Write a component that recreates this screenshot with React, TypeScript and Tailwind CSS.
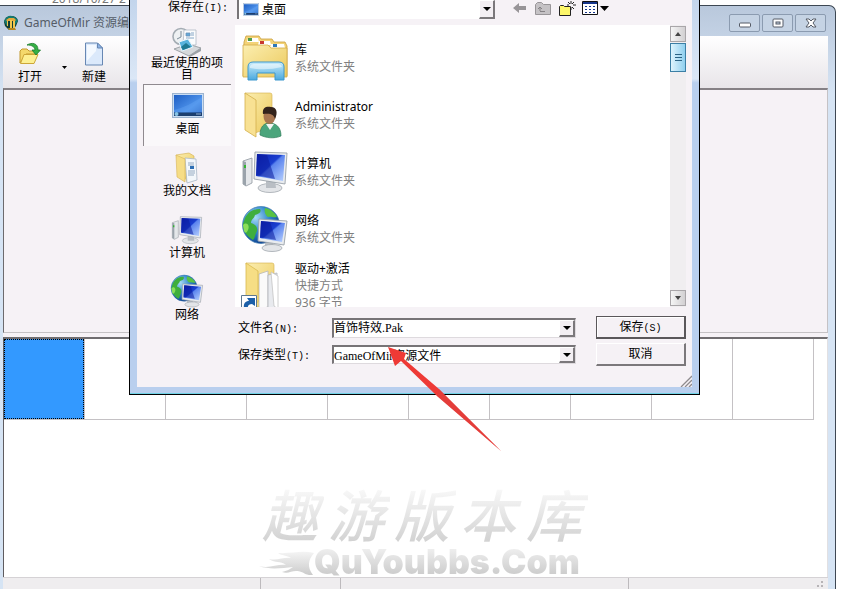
import type { ReactNode } from "react";

const ui = "font-['Noto_Sans','Noto_Sans_CJK_SC',sans-serif]";
const song = "font-['Liberation_Serif','Noto_Sans_CJK_SC',serif]";

function Defs() {
  return (
    <svg className="absolute w-0 h-0" aria-hidden="true">
      <defs>
        <linearGradient id="screen" x1="0" y1="0" x2="1" y2="1">
          <stop offset="0" stopColor="#0a1fae" />
          <stop offset="0.45" stopColor="#1a3fd0" />
          <stop offset="0.5" stopColor="#5b84ee" />
          <stop offset="1" stopColor="#b9d2ff" />
        </linearGradient>
        <linearGradient id="desk" x1="0" y1="0" x2="1" y2="1">
          <stop offset="0" stopColor="#1f5fc4" />
          <stop offset="0.6" stopColor="#4d92ea" />
          <stop offset="1" stopColor="#2560bf" />
        </linearGradient>
        <linearGradient id="folder" x1="0" y1="0" x2="1" y2="1">
          <stop offset="0" stopColor="#fbeeb0" />
          <stop offset="1" stopColor="#ecc95c" />
        </linearGradient>
        <linearGradient id="glass" x1="0" y1="0" x2="0" y2="1">
          <stop offset="0" stopColor="#c9ecfa" />
          <stop offset="1" stopColor="#4ba9de" />
        </linearGradient>
        <radialGradient id="globe" cx="0.35" cy="0.3" r="0.75">
          <stop offset="0" stopColor="#a8dcf5" />
          <stop offset="0.5" stopColor="#2f86cc" />
          <stop offset="1" stopColor="#0d3f8e" />
        </radialGradient>
        <linearGradient id="smoke" x1="0" y1="0" x2="0" y2="1">
          <stop offset="0" stopColor="#f4f4f4" />
          <stop offset="1" stopColor="#cbcbcb" />
        </linearGradient>
      </defs>
    </svg>
  );
}

function ComputerIcon({ className }: { className: string }) {
  return (
    <svg viewBox="0 0 48 48" className={className} aria-hidden="true">
      <path d="M2 13l9-3v25l-6 3-3-2z" fill="#e4e7ea" stroke="#8f979f" strokeWidth="0.8" />
      <path d="M2 13l3 1v24l-3-2z" fill="#9aa3ab" />
      <path d="M3 17h2v3H3z" fill="#31b531" />
      <ellipse cx="29" cy="40" rx="12" ry="4.5" fill="#e3e5e8" stroke="#a2a8ae" strokeWidth="0.8" />
      <path d="M25 32h9l1 8h-10z" fill="#b9bec4" />
      <path d="M14 4l32 1-2 31-31-5z" fill="#e9ecef" stroke="#9aa1a9" strokeWidth="0.9" />
      <path d="M16 6l28 1-2 26-27-5z" fill="url(#screen)" />
      <path d="M16 6l10 1 8 24-19-4z" fill="#0b1c9c" opacity="0.55" />
    </svg>
  );
}

function NetworkIcon({ className }: { className: string }) {
  return (
    <svg viewBox="0 0 48 48" className={className} aria-hidden="true">
      <circle cx="20" cy="20" r="18.5" fill="url(#globe)" stroke="#2a6aa5" strokeWidth="0.6" />
      <path d="M4 13c4-7 9-9 15-9 2 3-1 5-5 6-1 4-4 4-4 8 4 1 7 4 6 8-2 3-2 7-4 9-5-3-10-8-10-16z" fill="#3fae3c" />
      <path d="M24 3c6 1 10 5 12 9-4 1-6-1-9 0-3-2-4-6-3-9z" fill="#58c243" />
      <path d="M2 20c4-4 7 1 5 5s-3 3-4 1z" fill="#8ade59" />
      <path d="M24 38h8l1 5h-9z" fill="#b9bec4" />
      <ellipse cx="31" cy="43" rx="10" ry="3.5" fill="#e3e5e8" stroke="#a2a8ae" strokeWidth="0.8" />
      <path d="M18 14l28 2-3 24-26-4z" fill="#e9ecef" stroke="#9aa1a9" strokeWidth="0.9" />
      <path d="M20 16l24 2-3 19-22-4z" fill="url(#screen)" />
      <path d="M20 16l9 1 6 18-16-3z" fill="#0b1c9c" opacity="0.55" />
    </svg>
  );
}

function DesktopIcon({ className }: { className: string }) {
  return (
    <svg viewBox="0 0 32 25" className={className} aria-hidden="true">
      <rect x="0.5" y="0.5" width="31" height="24" fill="#c9ddf3" stroke="#9db4cf" />
      <rect x="2" y="2" width="28" height="21" fill="url(#desk)" />
      <path d="M2 17C12 15 22 9 30 4v15H2z" fill="#6aaaf5" opacity="0.35" />
      <rect x="2" y="19.500" width="28" height="3.500" fill="#1c3f6f" />
      <circle cx="4.500" cy="21" r="2" fill="#86c3e6" />
      <path d="M24 21h5" stroke="#8fb0d5" />
    </svg>
  );
}

function RecentIcon() {
  return (
    <svg viewBox="0 0 32 30" className="w-8 h-[30px]" aria-hidden="true">
      <path d="M3 22l14-5 13 4-12 8z" fill="#d5d8db" stroke="#8e9499" strokeWidth="0.8" />
      <path d="M18 29l12-8v3l-11 6z" fill="#9aa0a5" />
      <circle cx="10" cy="9.500" r="8" fill="#eef1f3" stroke="#a4acb3" strokeWidth="1.600" />
      <path d="M10 4v6l-4 2" fill="none" stroke="#7b8b98" />
      <path d="M13 3h12v15H12z" fill="#fbfcfd" stroke="#a7b2bd" strokeWidth="0.7" />
      <path d="M15 6h4v3h-4zM20 6h3M20 8h3M15 11h8" fill="#63a8d8" stroke="#6a93b8" strokeWidth="0.8" />
      <path d="M8 15l9-3 5 8-11 4z" fill="#58b3dd" stroke="#e8f5fb" />
      <path d="M10 20l5-4 5 4-8 3z" fill="#1f7a93" />
    </svg>
  );
}

function DocumentsIcon() {
  return (
    <svg viewBox="0 0 28 32" className="w-7 h-8" aria-hidden="true">
      <path d="M3 3l13-2 5 3v22l-7 4z" fill="url(#folder)" stroke="#d3ae4b" strokeWidth="0.6" />
      <path d="M12 6l11 1 1 21-10 3z" fill="#f3f7fb" stroke="#a9b7c6" strokeWidth="0.8" />
      <path d="M15 11h6M15 13h6M15 19h7M15 21h7M15 23h6" stroke="#96abc2" />
      <path d="M17 14h4v3h-4z" fill="#2e6fb4" />
      <path d="M3 3l9 4v23l-8-5z" fill="#f6dd86" stroke="#d6b455" strokeWidth="0.6" />
    </svg>
  );
}

function LibraryIcon() {
  return (
    <svg viewBox="0 0 48 48" className="w-12 h-12" aria-hidden="true">
      <path d="M3 8l2-6h13l2 3h11l2 3h11l2 4v30H2z" fill="#f3d377" stroke="#c99f3c" strokeWidth="0.8" />
      <path d="M7 4h10l1 4H6z" fill="#fff" />
      <path d="M7 4h4v3H7z" fill="#4c9a49" />
      <path d="M18 7h11l1 4H17z" fill="#fff" />
      <path d="M19 7h4v3h-4z" fill="#c8382f" />
      <path d="M30 10h13l1 4H29z" fill="#fff" />
      <path d="M32 10h4v3h-4z" fill="#2e78b8" />
      <path d="M2 11h25l3 3h16v29H2z" fill="url(#folder)" stroke="#d3ab48" strokeWidth="0.8" />
      <path d="M7 46V33q0-5 5-5h26q5 0 5 5v13h-9v-7H16v7z" fill="url(#glass)" stroke="#3d97cd" />
      <path d="M9 32q1-2 4-2h24q3 0 4 3-16 4-32 1z" fill="#fff" opacity="0.5" />
    </svg>
  );
}

function UserFolderIcon() {
  return (
    <svg viewBox="0 0 48 48" className="w-12 h-12" aria-hidden="true">
      <path d="M4 2h25q2 0 2 2v32l-17 6z" fill="url(#folder)" stroke="#d3ae4b" strokeWidth="0.6" />
      <path d="M4 2l11 7v37L4 39z" fill="#f8e193" stroke="#d3ae4b" strokeWidth="0.8" />
      <path d="M19 44c0-8 4-12 9-12 7 0 12 4 12 13-7 3-15 2-21-1z" fill="#4ba57c" stroke="#2f7d5a" strokeWidth="0.7" />
      <path d="M25 33l4 6 4-6z" fill="#f2f5f3" />
      <ellipse cx="28.500" cy="25" rx="6" ry="8" fill="#a87650" />
      <path d="M22 23c-1-7 4-8 8-7 6 0 7 6 4 12-1-5-5-6-12-5z" fill="#33231b" />
    </svg>
  );
}

function ShortcutIcon() {
  return (
    <svg viewBox="0 0 48 48" className="w-12 h-12" aria-hidden="true">
      <path d="M5 1h26q2 0 2 2v38l-20 5z" fill="url(#folder)" stroke="#d3ae4b" strokeWidth="0.6" />
      <path d="M18 12l9-3v36l-9 2z" fill="#fafafa" stroke="#b8b8b8" strokeWidth="0.8" />
      <path d="M27 13l9-2v35h-9z" fill="#e8eaee" stroke="#b0b4ba" strokeWidth="0.8" />
      <path d="M30 10l7 4v33l-4-3z" fill="#fff" stroke="#c4c4c4" strokeWidth="0.8" />
      <path d="M5 1l12 8v31l-12 4z" fill="#f6de85" stroke="#d9b94f" strokeWidth="0.8" />
      <path d="M.5 33.500h15V48H.5z" fill="#fff" stroke="#5d7890" />
      <path d="M3 47c-1-6 2-8 5-8l-2-3h8v8l-3-2c-3 0-5 2-4 5z" fill="#1b5fa8" />
    </svg>
  );
}

function TitleIcon() {
  return (
    <svg viewBox="0 0 16 16" className="w-4 h-4" aria-hidden="true">
      <path d="M1 7q1-6 7-6 6 0 7 5l-2 5-3 4H6l-4-4z" fill="#143f35" />
      <path d="M1 6q3-6 8-5 5 1 6 5l-3 4-1-4H5l-1 5z" fill="#147a70" />
      <path d="M3 5l3-2h5l2 2-1 1H4z" fill="#e3a93b" />
      <path d="M7 5h2v8H7zM10 6h2v8h-2zM4 6h1v5H4z" fill="#f0c64d" />
      <path d="M5 13h7l1 2H6z" fill="#b8861d" />
    </svg>
  );
}

function OpenIcon() {
  return (
    <svg viewBox="0 0 24 24" className="w-6 h-6" aria-hidden="true">
      <path d="M2 21V9l2-2h5l2 2h7v3H8z" fill="#f4d96c" stroke="#c2992e" />
      <path d="M2.500 21.500L6 12.500h14l-4 9z" fill="#fdf092" stroke="#cda638" />
      <path d="M9 3c5-3 11-2 11 5h2.500L18 13l-4-5h3c0-3-3-5-8-5z" fill="#35b045" stroke="#1b7a2a" strokeWidth="0.8" />
    </svg>
  );
}

function NewIcon() {
  return (
    <svg viewBox="0 0 24 24" className="w-6 h-6" aria-hidden="true">
      <path d="M3.500 1h12l5 5v17h-17z" fill="#dbe9fb" stroke="#6787b3" />
      <path d="M5 3h9v6L5 19z" fill="#f4f9ff" />
      <path d="M15.500 1v5h5z" fill="#8fb4e6" stroke="#6787b3" />
    </svg>
  );
}

function Triangle() {
  return (
    <svg viewBox="0 0 8 4" className="w-2 h-1" aria-hidden="true">
      <path d="M0 0h8L4 4z" fill="#000" />
    </svg>
  );
}

const raised =
  "flex items-center justify-center bg-[#f3eff3] border-t border-l border-t-white border-l-white border-r-2 border-b-2 border-r-[#7b787b] border-b-[#7b787b]";
const sunken =
  "border-t-2 border-l-2 border-t-[#777477] border-l-[#777477] border-b border-r border-b-[#dedade] border-r-[#dedade]";

function Mono({ children }: { children: ReactNode }) {
  return <span className="font-['Liberation_Mono',monospace] text-[10px]">{children}</span>;
}

function Drop({ id, value, className }: { id: string; value: string; className: string }) {
  return (
    <div className={`relative bg-white ${className}`}>
      <select id={id} className="block w-full h-full appearance-none bg-transparent outline-none pr-5 text-[12px] text-black">
        <option>{value}</option>
      </select>
      <span className={`absolute right-0 top-0 bottom-0 w-4 pointer-events-none ${raised}`}>
        <Triangle />
      </span>
    </div>
  );
}

const places = [
  { name: "桌面", icon: <DesktopIcon className="w-8 h-[25px] mb-1" />, active: true },
  { name: "我的文档", icon: <DocumentsIcon /> },
  { name: "计算机", icon: <ComputerIcon className="w-8 h-8" /> },
  { name: "网络", icon: <NetworkIcon className="w-[34px] h-[34px]" /> },
];

const files = [
  { name: "库", info: ["系统文件夹"], icon: <LibraryIcon /> },
  { name: "Administrator", info: ["系统文件夹"], icon: <UserFolderIcon /> },
  { name: "计算机", info: ["系统文件夹"], icon: <ComputerIcon className="w-12 h-12" /> },
  { name: "网络", info: ["系统文件夹"], icon: <NetworkIcon className="w-12 h-12" /> },
  { name: "驱动+激活", info: ["快捷方式", "936 字节"], icon: <ShortcutIcon /> },
];

function PlacesBar() {
  return (
    <nav className="w-[88px] shrink-0 text-center text-[12px]">
      <button className="flex flex-col items-center w-full h-[59px] pt-[2px] leading-[12px]">
        <RecentIcon />
        <span className="w-[74px]">最近使用的项目</span>
      </button>
      {places.map((p) => (
        <button
          key={p.name}
          className={
            p.active
              ? "flex flex-col items-center justify-end w-full h-[62px] pb-[10px] leading-[14px] border-t border-l border-[#8f8a8f] bg-[#faf8fa]"
              : "flex flex-col items-center justify-end w-full h-[62px] pb-[10px] leading-[14px]"
          }
        >
          {p.icon}
          <span>{p.name}</span>
        </button>
      ))}
    </nav>
  );
}

function FileList() {
  return (
    <div className="flex flex-1 h-[282px] bg-white overflow-hidden">
      <ul className={`flex-1 pt-1 pl-[6px] ${ui} text-[12px] leading-[17px]`}>
        {files.map((f) => (
          <li key={f.name} className="flex items-center h-[57px] gap-[6px]">
            {f.icon}
            <div>
              <p className="text-black">{f.name}</p>
              {f.info.map((t) => (
                <p key={t} className="text-[#808080]">{t}</p>
              ))}
            </div>
          </li>
        ))}
      </ul>
      <div className="w-4 flex flex-col bg-[#f0eef0] py-px">
        <button aria-label="向上滚动" className="flex items-center justify-center h-4 border border-[#a9a6a9] bg-linear-to-r from-[#f5f5f5] to-[#d2d0d2]">
          <svg viewBox="0 0 6 4" className="w-[6px] h-1"><path d="M3 0l3 4H0z" fill="#444" /></svg>
        </button>
        <div className="flex flex-col items-center justify-center gap-[2px] h-[29px] mt-px border border-[#3c7fa5] bg-linear-to-r from-[#def4fd] to-[#8fcfee]">
          <span className="w-[7px] h-px bg-[#2b6384]" />
          <span className="w-[7px] h-px bg-[#2b6384]" />
          <span className="w-[7px] h-px bg-[#2b6384]" />
        </div>
        <button aria-label="向下滚动" className="flex items-center justify-center h-4 mt-auto border border-[#a9a6a9] bg-linear-to-r from-[#f5f5f5] to-[#d2d0d2]">
          <svg viewBox="0 0 6 4" className="w-[6px] h-1"><path d="M0 0h6L3 4z" fill="#444" /></svg>
        </button>
      </div>
    </div>
  );
}

function SaveDialog() {
  return (
    <section
      aria-label="另存为"
      className={`absolute left-[129px] right-[143px] top-0 border-x border-b border-black bg-linear-to-b from-[#c3d5ec] via-[#dbe7f6] via-20% to-[#b9cfee] to-21% px-[7px] pb-[7px] text-[12px] text-black ${song}`}
    >
      <div className="absolute inset-x-0 bottom-0 h-px bg-[#6fd3e6]" />
      <form className="bg-[#f6f2f6] pl-[6px]" onSubmit={(e) => e.preventDefault()}>
        <div className="flex items-start">
          <label htmlFor="folder-pick" className="w-[94px] pl-[25px] leading-[14px]">
            保存在<Mono>(I):</Mono>
          </label>
          <div className="flex w-[258px] h-[19px] bg-white border-l-2 border-[#777477]">
            <span className="flex items-center pl-1"><DesktopIcon className="w-4 h-[13px]" /></span>
            <Drop id="folder-pick" value="桌面" className="flex-1 pl-[3px]" />
          </div>
          <div className="flex items-center h-4 ml-[18px] gap-2">
            <button aria-label="后退">
              <svg viewBox="0 0 14 12" className="block w-[14px] h-3"><path d="M0 6l6-5v3h7v4H6v3z" fill="#989598" /></svg>
            </button>
            <button aria-label="上一级">
              <svg viewBox="0 0 16 14" className="block w-4 h-[14px]">
                <path d="M.5 3.500l2-2h4l2 2h7v10H.5z" fill="#c5c2c5" stroke="#989598" />
                <path d="M5 10V6M3 8l2-2 2 2M5 10.500h5" fill="none" stroke="#858285" />
              </svg>
            </button>
            <button aria-label="新建文件夹">
              <svg viewBox="0 0 17 15" className="block w-[17px] h-[15px]">
                <path d="M.5 5.500l1-1h3l1 1h6v9H.5z" fill="#fdf76a" stroke="#222" />
                <path d="M12 0v3M12 6v3M8 4h2M14 4h3M9 1l2 2M15 1l-2 2M15 8l-2-2" stroke="#222" />
              </svg>
            </button>
            <button aria-label="查看" className="flex items-center gap-[2px] -ml-[2px]">
              <svg viewBox="0 0 16 14" className="block w-4 h-[14px]">
                <path d="M.5.500h15v13H.5z" fill="#fff" stroke="#111" />
                <path d="M1 1h14v2H1z" fill="#16358c" />
                <path d="M3 5.500h2M3 8.500h2M3 11.500h2M7 5.500h2M7 8.500h2M7 11.500h2M11 5.500h2M11 8.500h2M11 11.500h2" stroke="#16358c" />
              </svg>
              <svg viewBox="0 0 9 5" className="block w-[9px] h-[5px]"><path d="M0 0h9L4.500 5z" fill="#000" /></svg>
            </button>
          </div>
        </div>

        <div className="flex pr-[6px] pt-[6px] gap-1 h-[288px]">
          <PlacesBar />
          <FileList />
        </div>

        <div className="pl-[95px] pr-[6px] pt-[9px] grid grid-cols-[94px_1fr_90px] gap-y-1 items-center">
          <label htmlFor="file-name">文件名<Mono>(N):</Mono></label>
          <div className={`flex h-5 mr-5 bg-white ${sunken}`}>
            <input id="file-name" type="text" defaultValue="首饰特效.Pak" className="flex-1 min-w-0 outline-none text-[12px]" />
            <button type="button" aria-label="展开" className={`w-4 ${raised}`}><Triangle /></button>
          </div>
          <button type="submit" className="h-[23px] bg-[#f5f1f5] border border-[#5a575a] border-r-2 border-b-2 shadow-[inset_1px_1px_0_#fff]">
            保存<Mono>(S)</Mono>
          </button>
          <label htmlFor="file-type">保存类型<Mono>(T):</Mono></label>
          <Drop id="file-type" value="GameOfMir资源文件" className={`h-[19px] mr-5 ${sunken}`} />
          <button type="button" className="h-[23px] bg-[#f5f1f5] border border-t-white border-l-white border-r-2 border-b-2 border-r-[#7b787b] border-b-[#7b787b]">
            取消
          </button>
        </div>
        <div className="flex justify-end h-[21px] items-end">
          <svg viewBox="0 0 12 12" className="w-3 h-3" aria-hidden="true">
            <path d="M1 12L12 1M5 12l7-7M9 12l3-3" stroke="#8d8a8d" strokeWidth="1.300" />
          </svg>
        </div>
      </form>
    </section>
  );
}

function Watermark() {
  return (
    <div className="absolute left-[258px] top-[480px] text-transparent" aria-hidden="true">
      <div className="flex gap-1 pl-1 font-['Noto_Sans_CJK_SC',sans-serif] italic font-medium text-[56px] leading-[66px]">
        {["趣", "游", "版", "本", "库"].map((c) => (
          <span key={c} className="pr-[6px] bg-clip-text bg-linear-to-b from-white to-[#cfcfcf]">{c}</span>
        ))}
      </div>
      <div className="flex items-center">
        <svg viewBox="0 0 56 28" className="w-14 h-7">
          <path d="M1 18c10 3 18-2 27-1-6-5-10-1-17-6 8 2 15-2 22-1-4-3-9-2-13-5 12 1 24-3 36 0-6 7-7 14-1 22-8 1-11-5-17-4-5 0-8 3-14 1 5-1 8-3 11-5-11 1-23 3-34-1z" fill="url(#smoke)" />
        </svg>
        <span className="bg-clip-text bg-linear-to-b from-[#f2f2f2] to-[#c8c8c8] font-['Inter',sans-serif] font-black text-[34px] leading-[32px] pr-1">
          QuYoubbs.Com
        </span>
      </div>
    </div>
  );
}

function WindowButtons() {
  const box = "flex items-center justify-center w-[31px] h-[18px] rounded-[2px] border border-[#8b9bb0] bg-[#c5d3e4]";
  return (
    <div className="flex gap-[2px] ml-auto">
      <button aria-label="最小化" className={box}>
        <svg viewBox="0 0 12 6" className="w-3 h-[6px] mt-1"><rect x="0.500" y="1" width="11" height="4" rx="1" fill="#fff" stroke="#555b66" /></svg>
      </button>
      <button aria-label="最大化" className={box}>
        <svg viewBox="0 0 12 10" className="w-3 h-[10px]">
          <rect x="1" y="1" width="10" height="8" rx="1" fill="#fff" stroke="#555b66" />
          <rect x="4" y="4" width="4" height="2" fill="#c5d3e4" stroke="#555b66" />
        </svg>
      </button>
      <button aria-label="关闭" className={box}>
        <svg viewBox="0 0 12 10" className="w-3 h-[10px]">
          <path d="M1 1h3l2 2 2-2h3L8 5l3 4H8L6 7 4 9H1l3-4z" fill="#fff" stroke="#555b66" />
        </svg>
      </button>
    </div>
  );
}

export default function App() {
  return (
    <div className={`relative flex flex-col min-h-screen bg-white overflow-hidden text-[12px] text-black ${ui}`}>
      <Defs />
      <div className="flex items-end h-[5px] pl-[52px] overflow-hidden text-[#777]">
        <span className="leading-[12px]">2018/10/27 2</span>
      </div>

      <main className="flex flex-col flex-1 mr-[7px] pl-[3px] pr-[7px] border-t border-r border-[#3d4753] rounded-tr-[7px] bg-[#d6e4f4] bg-linear-to-b from-[#b9c8dc] to-[#d6e4f4] to-15%">
        <header className="flex items-center h-[30px] pt-[3px] pr-[2px]">
          <TitleIcon />
          <h1 className="pl-[5px] text-[#555d68]">GameOfMir 资源编辑器</h1>
          <WindowButtons />
        </header>

        <div className="flex h-[52px] pt-[6px] bg-linear-to-b from-white to-[#e8e5e9] leading-[14px]">
          <button className="flex flex-col items-center w-[54px] gap-1"><OpenIcon />打开</button>
          <button aria-label="打开菜单" className="flex items-center justify-end w-[10px] pt-1">
            <svg viewBox="0 0 5 3" className="w-[5px] h-[3px]"><path d="M0 0h5L2.500 3z" fill="#000" /></svg>
          </button>
          <button className="flex flex-col items-center w-[54px] gap-1"><NewIcon />新建</button>
        </div>

        <div className="h-[245px] bg-[#f6f2f6] border-t-2 border-l border-t-[#858085] border-l-[#6d6a6d] border-r border-b border-r-[#c5c2c5] border-b-[#c5c2c5]" />
        <div className="h-1 bg-[#f6f2f6]" />

        <div className="flex-1 bg-white border-t-2 border-l border-t-[#706d70] border-l-[#5f5c5f] border-r border-r-[#e2e0e2] overflow-hidden">
          <ul className="flex">
            <li className="w-[81px] h-[81px] shrink-0 border-r border-b border-[#c4c1c4]">
              <div className="h-full bg-[#3399ff] border border-dotted border-black" />
            </li>
            {[1, 2, 3, 4, 5, 6, 7, 8, 9].map((n) => (
              <li key={n} className="w-[81px] h-[81px] shrink-0 border-r border-b border-[#c4c1c4]" />
            ))}
          </ul>
        </div>

        <footer className="flex h-3 border-t border-[#d5d2d5] bg-[#efedef]">
          <div className="w-[258px] border-r border-[#bdbabd]" />
          <div className="w-20 border-r border-[#bdbabd]" />
          <div className="w-[288px] border-r border-[#bdbabd]" />
          <svg viewBox="0 0 8 8" className="w-2 h-2 ml-auto mr-1 mt-[3px]" aria-hidden="true">
            <path d="M5 0h2v2H5zM5 4h2v2H5zM1 4h2v2H1z" fill="#b7b4b7" />
          </svg>
        </footer>
      </main>

      <Watermark />
      <SaveDialog />

      <svg viewBox="0 0 114 105" className="absolute left-[388px] top-[347px] w-[114px] h-[105px] pointer-events-none" aria-hidden="true">
        <path d="M0 0l18 6-2 6 35 30 62 62-64-55-36-35-6 5z" fill="#ee3a36" />
        <path d="M51 42l62 62-64-55z" fill="#d9403d" opacity="0.5" />
      </svg>
    </div>
  );
}
